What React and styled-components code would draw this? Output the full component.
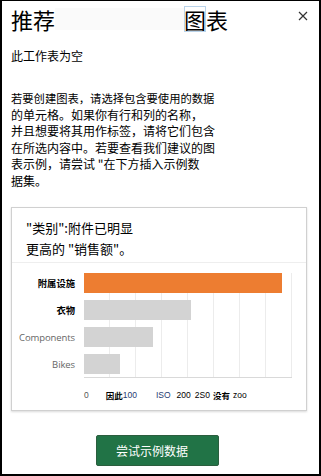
import React from "react";
import styled, { createGlobalStyle } from "styled-components";

const Global = createGlobalStyle`
  html, body { margin: 0; padding: 0; background: #fff; }
  body { font-family: "Noto Sans CJK SC", "Noto Sans", sans-serif; color: #000; }
`;

const Pane = styled.div`
  box-sizing: border-box;
  width: 321px;
  height: 476px;
  border: 2px solid #000;
  border-top-width: 1px;
  padding: 0 13px 0 9px;
  display: flex;
  flex-direction: column;
  overflow: hidden;
`;

const Header = styled.div`
  display: flex;
  align-items: flex-start;
  justify-content: space-between;
  padding-top: 5px;
  height: 34px;
`;

const Title = styled.h1`
  margin: 0;
  font-size: 22px;
  font-weight: 400;
  line-height: 26px;
  display: flex;
  align-items: center;
`;

const Blank = styled.span`
  display: inline-block;
  width: 129px;
  height: 22px;
  background: #fafafa;
`;

const Focus = styled.span`
  outline: 1px solid #b9d3ea;
  outline-offset: -1px;
`;

const Close = styled.button`
  border: 0;
  background: none;
  padding: 0;
  margin: 3px -4px 0 0;
  width: 14px;
  height: 14px;
  display: flex;
  align-items: center;
  justify-content: center;
  cursor: pointer;
`;

const Empty = styled.p`
  margin: 8px 0 0;
  font-size: 12px;
  line-height: 16px;
`;

const Help = styled.p`
  margin: 26px 0 0;
  font-size: 12px;
  line-height: 16.5px;
`;

const HelpLine = styled.span`
  display: block;
  font-size: ${(p) => p.$size || 12}px;
`;

const Card = styled.div`
  margin-top: 18px;
  width: 296px;
  height: 204px;
  box-sizing: border-box;
  border: 1px solid #d0d0d0;
  box-shadow: 0 1px 2px rgba(0, 0, 0, 0.15);
  display: flex;
  flex-direction: column;
`;

const CardTitle = styled.div`
  padding: 9px 14px 3px;
  font-size: 13px;
  line-height: 21px;
  border-bottom: 1px solid #eeeeee;
`;

const Chart = styled.div`
  padding: 10px 0 0;
  display: grid;
  grid-template-columns: 63px 208px;
  column-gap: 9px;
`;

const Labels = styled.div`
  display: flex;
  flex-direction: column;
  gap: 7px;
`;

const Label = styled.div`
  height: 20px;
  display: flex;
  align-items: center;
  justify-content: flex-end;
  font-family: ${(p) => (p.$latin ? '"Open Sans", "Noto Sans", sans-serif' : '"Noto Sans CJK SC", sans-serif')};
  font-size: ${(p) => (p.$latin ? 9.5 : 9.3)}px;
  letter-spacing: ${(p) => (p.$latin ? "-0.1px" : "0")};
  font-weight: ${(p) => (p.$latin ? 400 : 700)};
  color: ${(p) => (p.$latin ? "#666" : "#000")};
  white-space: nowrap;
`;

const Plot = styled.div`
  display: flex;
  flex-direction: column;
  gap: 7px;
  padding-bottom: 3px;
  border-bottom: 1px solid #d9d9d9;
  background-image: repeating-linear-gradient(
    to right,
    transparent 0,
    transparent 25px,
    #ececec 25px,
    #ececec 26px
  );
`;

const Bar = styled.div`
  height: 20px;
  background: ${(p) => (p.$hi ? "#ED7D31" : "#d3d3d3")};
`;

const Axis = styled.div`
  grid-column: 2;
  display: flex;
  align-items: center;
  height: 14px;
  margin-top: 10px;
  font-size: 9px;
  white-space: nowrap;
`;

const Tick = styled.span`
  margin-left: ${(p) => p.$ml || 0}px;
  color: ${(p) => p.$c || "#000"};
  font-family: ${(p) => (p.$latin ? '"Liberation Sans", sans-serif' : '"Noto Sans CJK SC", sans-serif')};
  font-size: 8.5px;
  font-weight: ${(p) => (p.$bold ? 700 : 400)};
`;

const Footer = styled.div`
  flex: 1;
  display: flex;
  justify-content: center;
  align-items: flex-start;
  padding-top: 24px;
`;

const TryButton = styled.button`
  width: 123px;
  height: 31px;
  margin-left: -2px;
  background: #217346;
  border: 1px solid #2b5e3e;
  border-radius: 2px;
  color: #fff;
  font-family: "Noto Sans CJK SC", sans-serif;
  font-size: 12px;
  text-align: left;
  padding: 0 0 0 19px;
  cursor: pointer;
`;

const data = [
  { label: "附属设施", value: 198, hi: true },
  { label: "衣物", value: 107 },
  { label: "Components", value: 69, latin: true },
  { label: "Bikes", value: 36, latin: true },
];

export default function App() {
  return (
    <>
      <Global />
      <Pane>
        <Header>
          <Title>
            推荐<Blank />
            <Focus>图</Focus>表
          </Title>
          <Close aria-label="关闭">
            <svg width="10" height="10" viewBox="0 0 10 10">
              <path d="M1 1L9 9M9 1L1 9" stroke="#333" strokeWidth="1.2" />
            </svg>
          </Close>
        </Header>
        <Empty>此工作表为空</Empty>
        <Help>
          <HelpLine $size={11.3}>若要创建图表，请选择包含要使用的数据</HelpLine>
          <HelpLine>的单元格。如果你有行和列的名称，</HelpLine>
          <HelpLine>并且想要将其用作标签，请将它们包含</HelpLine>
          <HelpLine>在所选内容中。若要查看我们建议的图</HelpLine>
          <HelpLine>表示例，请尝试 "在下方插入示例数</HelpLine>
          <HelpLine>据集。</HelpLine>
        </Help>
        <Card>
          <CardTitle>
            "类别":附件已明显
            <br />
            更高的 "销售额"。
          </CardTitle>
          <Chart>
            <Labels>
              {data.map((d) => (
                <Label key={d.label} $latin={d.latin}>
                  {d.label}
                </Label>
              ))}
            </Labels>
            <Plot>
              {data.map((d) => (
                <Bar key={d.label} $hi={d.hi} style={{ width: `${d.value}px` }} />
              ))}
            </Plot>
            <Axis>
              <Tick $latin $c="#555">0</Tick>
              <Tick $ml={17} $bold>因此</Tick>
              <Tick $latin $c="#1f3b73">100</Tick>
              <Tick $ml={19} $latin $c="#1f3b73">ISO</Tick>
              <Tick $ml={6} $latin>200</Tick>
              <Tick $ml={4} $latin>2S0</Tick>
              <Tick $ml={3} $bold>没有</Tick>
              <Tick $ml={3} $latin>zoo</Tick>
            </Axis>
          </Chart>
        </Card>
        <Footer>
          <TryButton>尝试示例数据</TryButton>
        </Footer>
      </Pane>
    </>
  );
}
